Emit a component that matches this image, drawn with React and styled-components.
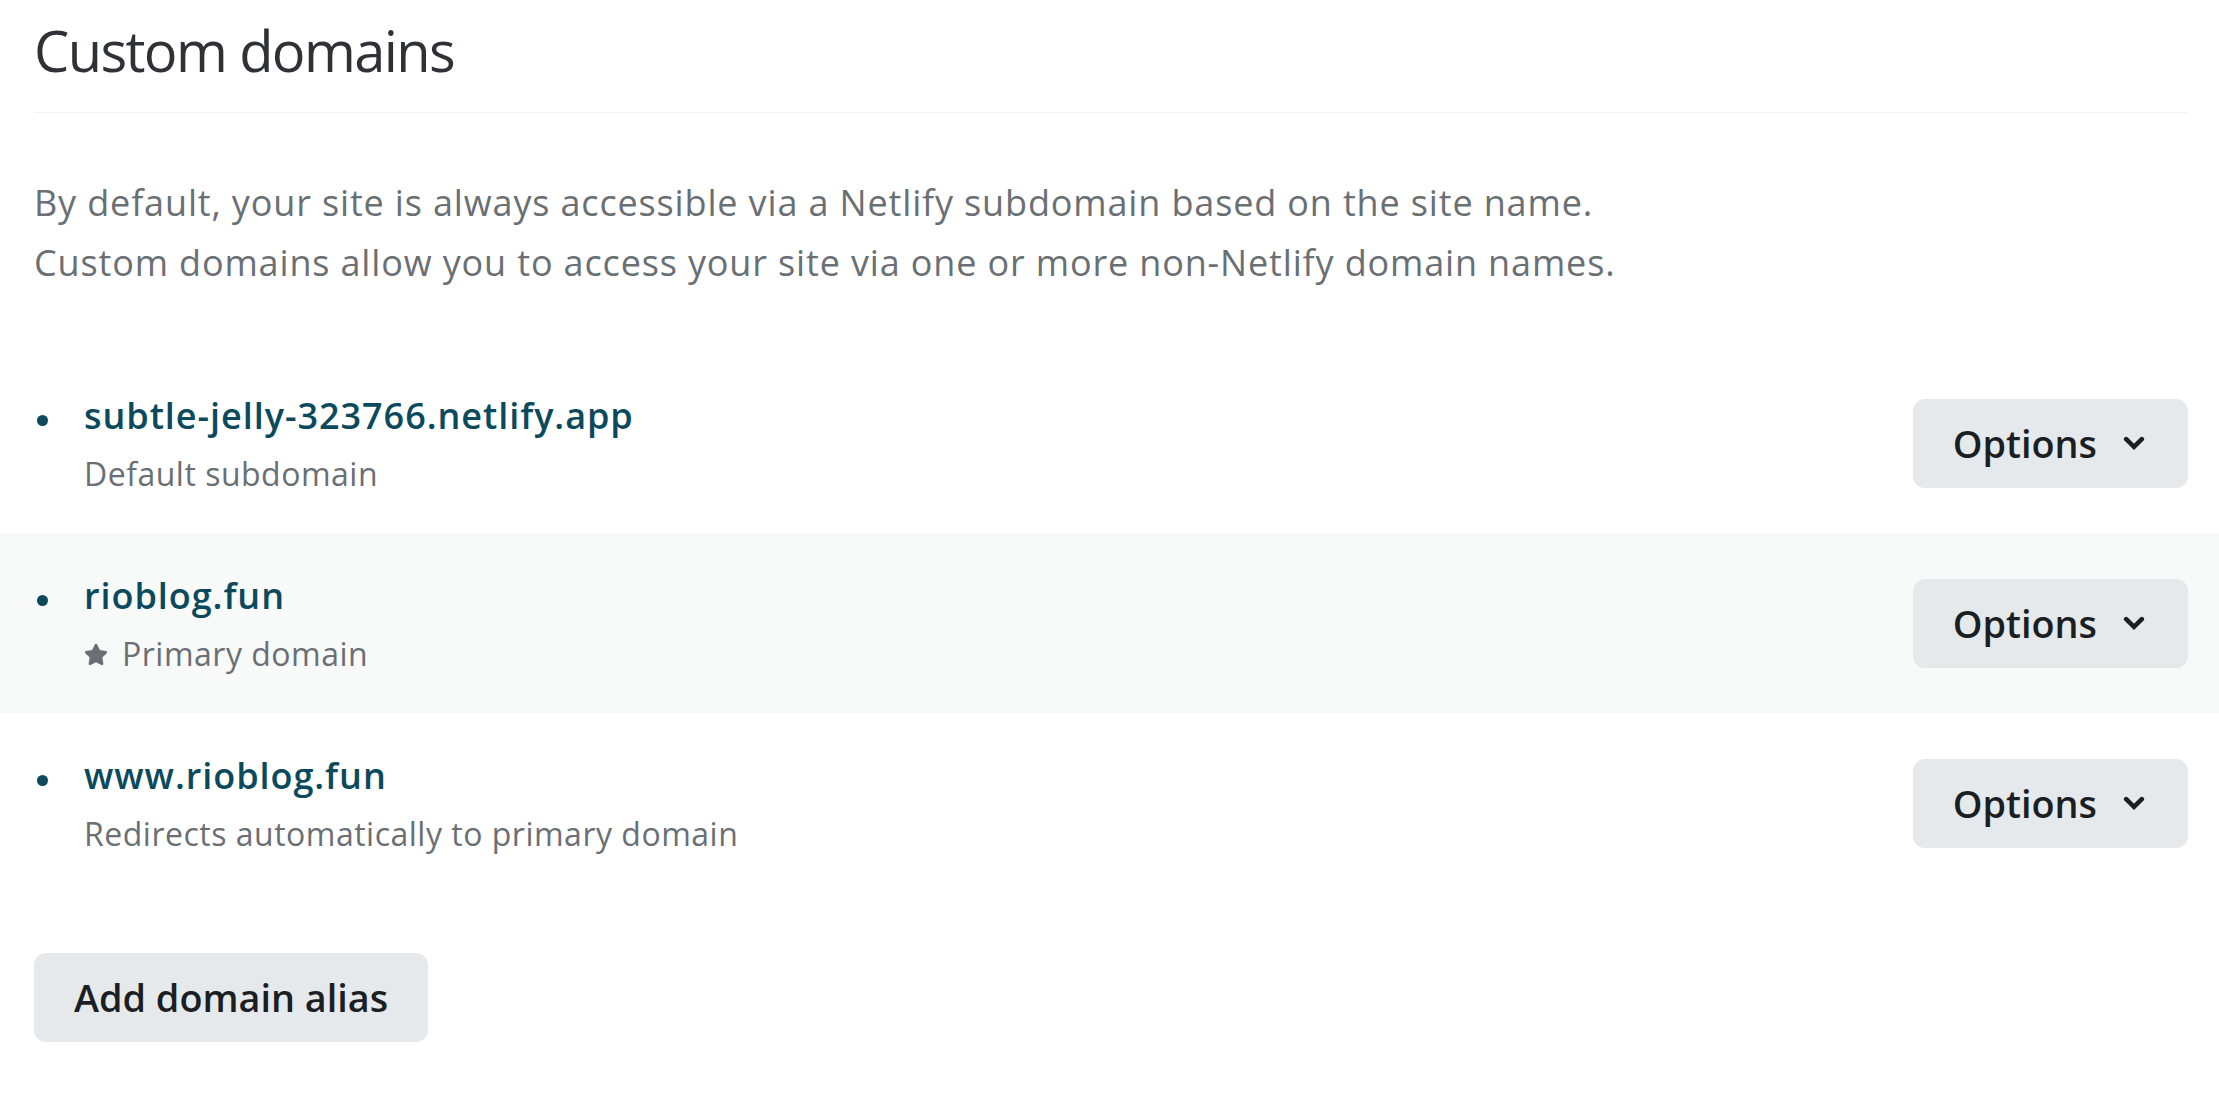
import React from 'react'
import styled, { createGlobalStyle } from 'styled-components'

const GlobalStyle = createGlobalStyle`
  html, body {
    margin: 0;
    padding: 0;
    background: #ffffff;
  }
  body {
    font-family: "Open Sans", "Noto Sans", "Liberation Sans", sans-serif;
    -webkit-font-smoothing: antialiased;
  }
`

const domains = [
  { name: 'subtle-jelly-323766.netlify.app', note: 'Default subdomain' },
  { name: 'rioblog.fun', note: 'Primary domain', primary: true },
  { name: 'www.rioblog.fun', note: 'Redirects automatically to primary domain' },
]

function StarIcon() {
  return (
    <svg width="24" height="23" viewBox="0 0 576 512" aria-hidden="true">
      <path
        fill="currentColor"
        d="M259.3 17.8L194 150.2 47.9 171.5c-26.2 3.8-36.7 36.1-17.7 54.6l105.7 103-25 145.5c-4.5 26.3 23.2 46 46.4 33.7L288 439.6l130.7 68.7c23.2 12.2 50.9-7.4 46.4-33.7l-25-145.5 105.7-103c19-18.5 8.5-50.8-17.7-54.6L382 150.2 316.7 17.8c-11.7-23.6-45.6-23.9-57.4 0z"
      />
    </svg>
  )
}

function ChevronIcon() {
  return (
    <svg width="22" height="14" viewBox="0 0 22 14" aria-hidden="true">
      <path d="M3.2 3.2l7.8 7.6 7.8-7.6" fill="none" stroke="currentColor" strokeWidth="4.6" strokeLinecap="round" strokeLinejoin="miter" />
    </svg>
  )
}

export default function App() {
  return (
    <>
      <GlobalStyle />
      <Page>
        <Header>
          <Title>Custom domains</Title>
        </Header>

        <Description>
          By default, your site is always accessible via a Netlify subdomain based on the site name.
          <br />
          Custom domains allow you to access your site via one or more non-Netlify domain names.
        </Description>

        <DomainList>
          {domains.map((d) => (
            <DomainRow key={d.name} $highlighted={d.primary}>
              <DomainInfo>
                <Bullet />
                <DomainText>
                  <DomainName href="#">{d.name}</DomainName>
                  <DomainNote>
                    {d.primary && <StarIcon />}
                    {d.note}
                  </DomainNote>
                </DomainText>
              </DomainInfo>
              <OptionsButton>
                Options
                <ChevronIcon />
              </OptionsButton>
            </DomainRow>
          ))}
        </DomainList>

        <AddButton>Add domain alias</AddButton>
      </Page>
    </>
  )
}

const Page = styled.div`
  padding: 0 31px 60px 34px;
`

const Header = styled.div`
  padding-top: 10px;
  padding-bottom: 22px;
  border-bottom: 1px solid #f2f3f4;
`

const Title = styled.h2`
  margin: 0;
  font-size: 56px;
  line-height: 80px;
  font-weight: 400;
  color: #2e3237;
  letter-spacing: -1.6px;
`

const Description = styled.p`
  margin: 60px 0 0;
  font-size: 36px;
  line-height: 60px;
  letter-spacing: 0.85px;
  color: #6a6f74;
`

const DomainList = styled.ul`
  list-style: none;
  margin: 60px -31px 0 -34px;
  padding: 0;
`

const DomainRow = styled.li`
  display: flex;
  align-items: center;
  justify-content: space-between;
  height: 180px;
  padding: 0 31px 0 34px;
  box-sizing: border-box;
  background: ${(p) => (p.$highlighted ? '#f8f9f9' : 'transparent')};
`

const DomainInfo = styled.div`
  display: flex;
  align-items: flex-start;
`

const Bullet = styled.span`
  width: 11px;
  height: 11px;
  border-radius: 50%;
  background: #0b4a5d;
  margin: 22px 36px 0 3px;
  flex-shrink: 0;
`

const DomainText = styled.div`
  display: flex;
  flex-direction: column;
`

const DomainName = styled.a`
  font-size: 36px;
  line-height: 46px;
  font-weight: 600;
  letter-spacing: 0.95px;
  color: #0b4a5d;
  text-decoration: none;
`

const DomainNote = styled.div`
  display: flex;
  align-items: center;
  gap: 14px;
  margin-top: 15px;
  font-size: 32px;
  line-height: 40px;
  letter-spacing: 0.5px;
  color: #6a6f74;

  svg {
    margin-top: 2px;
  }
`

const Button = styled.button`
  display: inline-flex;
  align-items: center;
  height: 89px;
  border: none;
  border-radius: 12px;
  background: #e6e9ec;
  color: #1b1f23;
  font-family: inherit;
  font-size: 37.8px;
  font-weight: 600;
  cursor: pointer;
`

const OptionsButton = styled(Button)`
  gap: 26px;
  padding: 0 43px 0 40px;
`

const AddButton = styled(Button)`
  margin-top: 60px;
  padding: 0 40px;
`
